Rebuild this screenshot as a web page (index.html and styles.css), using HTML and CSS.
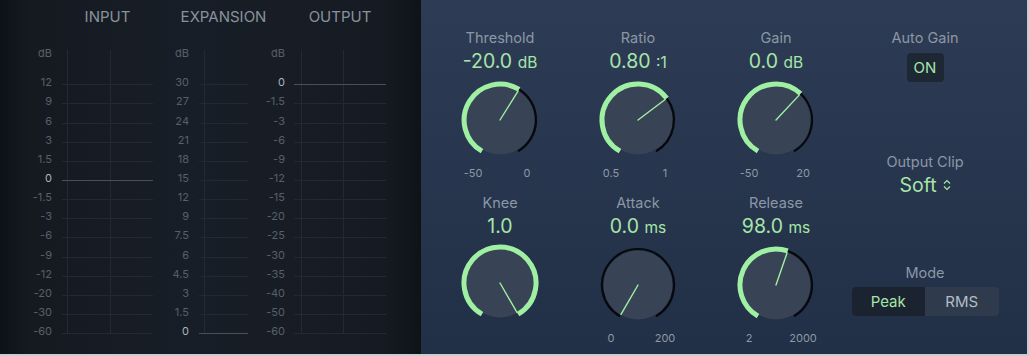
FILE: index.html
```html
<!DOCTYPE html>
<html lang="en">
<head>
  <meta charset="UTF-8" />
  <title>Expander</title>
  <link rel="stylesheet" href="styles.css">
</head>
<body>

  <div class="plugin">

    <!-- Meters -->
    <div class="meters">

      <div class="meter meter-input">
        <div class="meter-title">INPUT</div>
        <div class="scale">
          <div class="tick">dB</div>
          <div class="tick-gap"></div>
          <div class="tick">12</div>
          <div class="tick">9</div>
          <div class="tick">6</div>
          <div class="tick">3</div>
          <div class="tick">1.5</div>
          <div class="tick hi">0</div>
          <div class="tick">-1.5</div>
          <div class="tick">-3</div>
          <div class="tick">-6</div>
          <div class="tick">-9</div>
          <div class="tick">-12</div>
          <div class="tick">-20</div>
          <div class="tick">-30</div>
          <div class="tick">-60</div>
        </div>
        <div class="plot">
          <div class="line"></div><div class="line"></div><div class="line"></div>
          <div class="line"></div><div class="line"></div><div class="line hi"></div>
          <div class="line"></div><div class="line"></div><div class="line"></div>
          <div class="line"></div><div class="line"></div><div class="line"></div>
          <div class="line"></div><div class="line last"></div>
        </div>
      </div>

      <div class="meter meter-exp">
        <div class="meter-title">EXPANSION</div>
        <div class="scale">
          <div class="tick">dB</div>
          <div class="tick-gap"></div>
          <div class="tick">30</div>
          <div class="tick">27</div>
          <div class="tick">24</div>
          <div class="tick">21</div>
          <div class="tick">18</div>
          <div class="tick">15</div>
          <div class="tick">12</div>
          <div class="tick">9</div>
          <div class="tick">7.5</div>
          <div class="tick">6</div>
          <div class="tick">4.5</div>
          <div class="tick">3</div>
          <div class="tick">1.5</div>
          <div class="tick hi">0</div>
        </div>
        <div class="plot">
          <div class="line"></div><div class="line"></div><div class="line"></div>
          <div class="line"></div><div class="line"></div><div class="line"></div>
          <div class="line"></div><div class="line"></div><div class="line"></div>
          <div class="line"></div><div class="line"></div><div class="line"></div>
          <div class="line"></div><div class="line last hi"></div>
        </div>
      </div>

      <div class="meter meter-output">
        <div class="meter-title">OUTPUT</div>
        <div class="scale">
          <div class="tick">dB</div>
          <div class="tick-gap"></div>
          <div class="tick hi">0</div>
          <div class="tick">-1.5</div>
          <div class="tick">-3</div>
          <div class="tick">-6</div>
          <div class="tick">-9</div>
          <div class="tick">-12</div>
          <div class="tick">-15</div>
          <div class="tick">-20</div>
          <div class="tick">-25</div>
          <div class="tick">-30</div>
          <div class="tick">-35</div>
          <div class="tick">-40</div>
          <div class="tick">-50</div>
          <div class="tick">-60</div>
        </div>
        <div class="plot">
          <div class="line hi"></div><div class="line"></div><div class="line"></div>
          <div class="line"></div><div class="line"></div><div class="line"></div>
          <div class="line"></div><div class="line"></div><div class="line"></div>
          <div class="line"></div><div class="line"></div><div class="line"></div>
          <div class="line"></div><div class="line last"></div>
        </div>
      </div>

    </div>

    <!-- Controls -->
    <div class="controls">

      <div class="knobs">

        <div class="knob">
          <div class="knob-label">Threshold</div>
          <div class="knob-value">-20.0 <span class="unit">dB</span></div>
          <svg class="dial" width="84" height="84" viewBox="0 0 84 84">
            <circle class="body" cx="42" cy="42" r="34.5"/>
            <path class="track" d="M61.08 11.47 A36 36 0 0 1 60 73.18"/>
            <path class="fill" d="M24 73.18 A36 36 0 1 1 61.08 11.47"/>
            <line class="pointer" x1="42" y1="42" x2="60.02" y2="13.17"/>
          </svg>
          <div class="knob-scale"><span>-50</span><span>0</span></div>
        </div>

        <div class="knob">
          <div class="knob-label">Ratio</div>
          <div class="knob-value">0.80 <span class="unit">:1</span></div>
          <svg class="dial" width="84" height="84" viewBox="0 0 84 84">
            <circle class="body" cx="42" cy="42" r="34.5"/>
            <path class="track" d="M70.75 20.34 A36 36 0 0 1 60 73.18"/>
            <path class="fill" d="M24 73.18 A36 36 0 1 1 70.75 20.34"/>
            <line class="pointer" x1="42" y1="42" x2="69.15" y2="21.54"/>
          </svg>
          <div class="knob-scale"><span>0.5</span><span>1</span></div>
        </div>

        <div class="knob">
          <div class="knob-label">Gain</div>
          <div class="knob-value">0.0 <span class="unit">dB</span></div>
          <svg class="dial" width="84" height="84" viewBox="0 0 84 84">
            <circle class="body" cx="42" cy="42" r="34.5"/>
            <path class="track" d="M66.55 15.67 A36 36 0 0 1 60 73.18"/>
            <path class="fill" d="M24 73.18 A36 36 0 1 1 66.55 15.67"/>
            <line class="pointer" x1="42" y1="42" x2="65.19" y2="17.13"/>
          </svg>
          <div class="knob-scale"><span>-50</span><span>20</span></div>
        </div>

        <div class="knob">
          <div class="knob-label">Knee</div>
          <div class="knob-value">1.0</div>
          <svg class="dial" width="84" height="84" viewBox="0 0 84 84">
            <circle class="body" cx="42" cy="42" r="34.5"/>
            <path class="fill" d="M24 73.18 A36 36 0 1 1 60 73.18"/>
            <line class="pointer" x1="42" y1="42" x2="59" y2="71.44"/>
          </svg>
          <div class="knob-scale"></div>
        </div>

        <div class="knob">
          <div class="knob-label">Attack</div>
          <div class="knob-value">0.0 <span class="unit">ms</span></div>
          <svg class="dial" width="84" height="84" viewBox="0 0 84 84">
            <circle class="body" cx="42" cy="42" r="34.5"/>
            <path class="track" d="M24 73.18 A36 36 0 1 1 60 73.18"/>
            <line class="pointer" x1="42" y1="42" x2="25" y2="71.44"/>
          </svg>
          <div class="knob-scale"><span>0</span><span>200</span></div>
        </div>

        <div class="knob">
          <div class="knob-label">Release</div>
          <div class="knob-value">98.0 <span class="unit">ms</span></div>
          <svg class="dial" width="84" height="84" viewBox="0 0 84 84">
            <circle class="body" cx="42" cy="42" r="34.5"/>
            <path class="track" d="M53.72 7.96 A36 36 0 0 1 60 73.18"/>
            <path class="fill" d="M24 73.18 A36 36 0 0 1 53.72 7.96"/>
            <line class="pointer" x1="42" y1="42" x2="53.07" y2="9.85"/>
          </svg>
          <div class="knob-scale"><span>2</span><span>2000</span></div>
        </div>

      </div>

      <div class="side">
        <div class="side-label">Auto Gain</div>
        <button class="toggle">ON</button>

        <div class="side-label clip-label">Output Clip</div>
        <div class="select">Soft
          <svg width="8" height="12" viewBox="0 0 8 12">
            <path d="M1 4.5 L4 1.5 L7 4.5 M1 7.5 L4 10.5 L7 7.5"/>
          </svg>
        </div>

        <div class="side-label mode-label">Mode</div>
        <div class="segmented">
          <button class="seg active">Peak</button>
          <button class="seg">RMS</button>
        </div>
      </div>

    </div>
  </div>

</body>
</html>
```

FILE: styles.css
```css
* {
  box-sizing: border-box;
  margin: 0;
  padding: 0;
  font-family: Inter, 'Noto Sans', sans-serif;
}

body {
  background: #c9cdd2;
}

.plugin {
  display: flex;
  width: 1027px;
  height: 354px;
}

/* Meters */
.meters {
  display: flex;
  width: 421px;
  padding: 8px 0 0 22px;
  background: linear-gradient(to right, #0e1217 0, #151a21 28px, #181e27 45%, #161b23 380px, #0f1318 421px);
}

.meter {
  display: grid;
  grid-template-columns: 30px 91px;
  grid-template-rows: 18px auto;
  column-gap: 10px;
  row-gap: 18.4px;
  align-items: start;
}

.meter-exp {
  grid-template-columns: 30px 49px;
  margin-left: 6px;
}

.meter-output {
  grid-template-columns: 30px 92px;
  column-gap: 9px;
  margin-left: 7px;
}

.meter-title {
  grid-column: 2;
  grid-row: 1;
  display: flex;
  justify-content: center;
  white-space: nowrap;
  font-size: 15px;
  line-height: 18px;
  color: #89929c;
}

.scale {
  grid-column: 1;
  grid-row: 2;
  text-align: right;
}

.tick {
  height: 19.15px;
  line-height: 19.15px;
  font-size: 11px;
  color: #56606b;
}

.tick.hi {
  color: #aeb5bd;
}

.tick-gap {
  height: 9.8px;
}

.plot {
  grid-column: 2;
  grid-row: 2;
  margin-top: 5.6px;
  padding-top: 34.3px;
  background:
    linear-gradient(#222a33, #222a33) 5px 0 / 1px 100% no-repeat,
    linear-gradient(#222a33, #222a33) 48px 0 / 1px 100% no-repeat;
}

.meter-exp .plot {
  background: linear-gradient(#222a33, #222a33) 5px 0 / 1px 100% no-repeat;
}

.meter-output .plot {
  background:
    linear-gradient(#222a33, #222a33) 7px 0 / 1px 100% no-repeat,
    linear-gradient(#222a33, #222a33) 49px 0 / 1px 100% no-repeat;
}

.line {
  height: 19.15px;
  border-top: 1px solid #212932;
}

.line.last {
  height: 1px;
}

.line.hi {
  border-top-color: #48515b;
}

/* Controls */
.controls {
  display: flex;
  width: 606px;
  padding: 20px 0 0 10px;
  background: linear-gradient(#2d3c54, #212f47);
}

.knobs {
  display: grid;
  grid-template-columns: repeat(3, 138px);
  grid-template-rows: repeat(2, 165px);
}

.knob {
  display: flex;
  flex-direction: column;
  align-items: center;
  padding-top: 9px;
}

.knob-label, .side-label {
  font-size: 14.5px;
  line-height: 18px;
  color: #8c97a6;
}

.knob-value {
  margin-top: 2px;
  font-size: 19.5px;
  line-height: 24px;
  color: #a6e6a8;
  white-space: nowrap;
}

.unit {
  font-size: 15.5px;
}

.dial {
  margin-top: 3px;
}

.dial .body {
  fill: #394356;
}

.dial path {
  fill: none;
}

.dial .track {
  stroke: #06080b;
  stroke-width: 2.2;
}

.dial .fill {
  stroke: #9ff0a3;
  stroke-width: 5;
}

.dial .pointer {
  stroke: #9ff0a3;
  stroke-width: 1.4;
  stroke-linecap: round;
}

.knob-scale {
  display: flex;
  justify-content: space-between;
  width: 84px;
  margin-top: 4px;
  font-size: 11px;
  line-height: 14px;
  color: #8f99a5;
}

.knob-scale span {
  width: 30px;
  text-align: center;
}

.side {
  display: flex;
  flex-direction: column;
  align-items: center;
  width: 160px;
  padding-top: 9px;
}

.toggle {
  margin-top: 6px;
  width: 37px;
  height: 29px;
  border: none;
  border-radius: 4px;
  background: #1e2835;
  color: #a6e6a8;
  font-size: 15px;
}

.clip-label {
  margin-top: 70.5px;
}

.select {
  display: flex;
  align-items: center;
  gap: 6px;
  margin-top: 2.5px;
  font-size: 19.5px;
  line-height: 24px;
  color: #a6e6a8;
}

.select svg path {
  fill: none;
  stroke: #a6e6a8;
  stroke-width: 1.2;
}

.mode-label {
  margin-top: 66.5px;
}

.segmented {
  display: flex;
  margin-top: 5.5px;
  width: 147px;
  height: 29px;
  border-radius: 4px;
  overflow: hidden;
  background: #2f3b4d;
}

.seg {
  flex: 1;
  border: none;
  background: transparent;
  color: #b3bcc7;
  font-size: 15px;
}

.seg.active {
  background: #1b2330;
  color: #a6e6a8;
}
```
